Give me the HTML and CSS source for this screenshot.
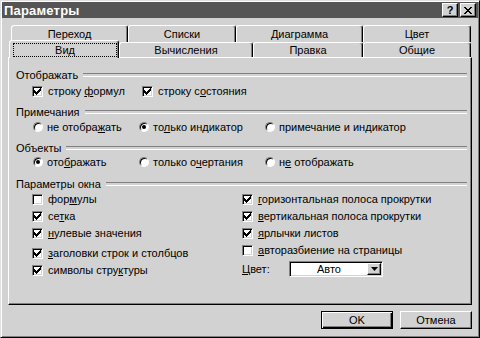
FILE: index.html
```html
<!DOCTYPE html>
<html lang="ru">
<head>
  <meta charset="UTF-8">
  <title>Параметры</title>
  <link rel="stylesheet" href="styles.css">
</head>
<body>
  <div class="dialog">
    <!-- Title bar -->
    <div class="titlebar">
      <span class="title">Параметры</span>
      <div class="title-buttons">
        <button class="tb-btn help">?</button>
        <button class="tb-btn">
          <svg width="8" height="7" viewBox="0 0 8 7"><path d="M0 0h2v1h1v1h2v-1h1v-1h2v1h-1v1h-1v1h-1v1h1v1h1v1h1v1h-2v-1h-1v-1h-2v1h-1v1h-2v-1h1v-1h1v-1h1v-1h-1v-1h-1v-1h-1z" fill="#000"/></svg>
        </button>
      </div>
    </div>

    <!-- Tabs -->
    <div class="tabs">
      <div class="tab-row back">
        <div class="tab">Переход</div>
        <div class="tab">Списки</div>
        <div class="tab">Диаграмма</div>
        <div class="tab">Цвет</div>
      </div>
      <div class="tab-row front">
        <div class="tab active"><span class="focus">Вид</span></div>
        <div class="tab">Вычисления</div>
        <div class="tab">Правка</div>
        <div class="tab">Общие</div>
      </div>
    </div>

    <!-- Page "Вид" -->
    <div class="panel">
      <div class="group-title g1">Отображать</div>
      <div class="row two">
        <label class="opt"><span class="check on"><svg viewBox="0 0 9 9"><path d="M1 3h1v3h-1zM2 4h1v3h-1zM3 5h1v3h-1zM4 4h1v3h-1zM5 3h1v3h-1zM6 2h1v3h-1zM7 1h1v3h-1z"/></svg></span><span>строку <u>ф</u>ормул</span></label>
        <label class="opt"><span class="check on"><svg viewBox="0 0 9 9"><path d="M1 3h1v3h-1zM2 4h1v3h-1zM3 5h1v3h-1zM4 4h1v3h-1zM5 3h1v3h-1zM6 2h1v3h-1zM7 1h1v3h-1z"/></svg></span><span>строку с<u>о</u>стояния</span></label>
      </div>

      <div class="group-title g2">Примечания</div>
      <div class="row three r2">
        <label class="opt radio-opt"><span class="radio"></span><span>не отобра<u>ж</u>ать</span></label>
        <label class="opt radio-opt"><span class="radio on"></span><span>то<u>л</u>ько индикатор</span></label>
        <label class="opt radio-opt"><span class="radio"></span><span>примечание и ин<u>д</u>икатор</span></label>
      </div>

      <div class="group-title g3">Объекты</div>
      <div class="row three">
        <label class="opt radio-opt"><span class="radio on"></span><span>ото<u>б</u>ражать</span></label>
        <label class="opt radio-opt"><span class="radio"></span><span>только о<u>ч</u>ертания</span></label>
        <label class="opt radio-opt"><span class="radio"></span><span>н<u>е</u> отображать</span></label>
      </div>

      <div class="group-title g4">Параметры окна</div>
      <div class="columns">
        <div class="col">
          <label class="opt line"><span class="check"></span><span>фор<u>м</u>улы</span></label>
          <label class="opt line"><span class="check on"><svg viewBox="0 0 9 9"><path d="M1 3h1v3h-1zM2 4h1v3h-1zM3 5h1v3h-1zM4 4h1v3h-1zM5 3h1v3h-1zM6 2h1v3h-1zM7 1h1v3h-1z"/></svg></span><span>се<u>т</u>ка</span></label>
          <label class="opt line"><span class="check on"><svg viewBox="0 0 9 9"><path d="M1 3h1v3h-1zM2 4h1v3h-1zM3 5h1v3h-1zM4 4h1v3h-1zM5 3h1v3h-1zM6 2h1v3h-1zM7 1h1v3h-1z"/></svg></span><span><u>н</u>улевые значения</span></label>
          <label class="opt line gap-before"><span class="check on"><svg viewBox="0 0 9 9"><path d="M1 3h1v3h-1zM2 4h1v3h-1zM3 5h1v3h-1zM4 4h1v3h-1zM5 3h1v3h-1zM6 2h1v3h-1zM7 1h1v3h-1z"/></svg></span><span><u>з</u>аголовки строк и столбцов</span></label>
          <label class="opt line"><span class="check on"><svg viewBox="0 0 9 9"><path d="M1 3h1v3h-1zM2 4h1v3h-1zM3 5h1v3h-1zM4 4h1v3h-1zM5 3h1v3h-1zM6 2h1v3h-1zM7 1h1v3h-1z"/></svg></span><span>символы стру<u>к</u>туры</span></label>
        </div>
        <div class="col">
          <label class="opt line"><span class="check on"><svg viewBox="0 0 9 9"><path d="M1 3h1v3h-1zM2 4h1v3h-1zM3 5h1v3h-1zM4 4h1v3h-1zM5 3h1v3h-1zM6 2h1v3h-1zM7 1h1v3h-1z"/></svg></span><span><u>г</u>оризонтальная полоса прокрутки</span></label>
          <label class="opt line"><span class="check on"><svg viewBox="0 0 9 9"><path d="M1 3h1v3h-1zM2 4h1v3h-1zM3 5h1v3h-1zM4 4h1v3h-1zM5 3h1v3h-1zM6 2h1v3h-1zM7 1h1v3h-1z"/></svg></span><span><u>в</u>ертикальная полоса прокрутки</span></label>
          <label class="opt line"><span class="check on"><svg viewBox="0 0 9 9"><path d="M1 3h1v3h-1zM2 4h1v3h-1zM3 5h1v3h-1zM4 4h1v3h-1zM5 3h1v3h-1zM6 2h1v3h-1zM7 1h1v3h-1z"/></svg></span><span><u>я</u>рлычки листов</span></label>
          <label class="opt line"><span class="check"></span><span><u>а</u>вторазбиение на страницы</span></label>
          <div class="color-row">
            <span class="color-label"><u>Ц</u>вет:</span>
            <div class="select">
              <span class="select-value">Авто</span>
              <span class="select-arrow"><svg width="7" height="4" viewBox="0 0 7 4"><path d="M0 0h7l-3.5 4z" fill="#000"/></svg></span>
            </div>
          </div>
        </div>
      </div>
    </div>

    <!-- Buttons -->
    <div class="buttons">
      <button class="btn default">OK</button>
      <button class="btn">Отмена</button>
    </div>
  </div>
</body>
</html>
```

FILE: styles.css
```css
/* Base */
* { margin: 0; padding: 0; box-sizing: border-box; }
body {
  background: #d2d2d2;
  color: #000;
  font-family: "Liberation Sans", Arial, sans-serif;
  font-size: 11px;
}
button { font: inherit; color: inherit; }
u { text-decoration: underline; text-underline-offset: 1px; }

/* Window frame */
.dialog {
  width: 480px;
  height: 338px;
  background: #d2d2d2;
  border: 1px solid;
  border-color: #e0e0e0 #000 #000 #e0e0e0;
  box-shadow: inset 1px 1px #fff, inset -1px -1px #808080;
  padding: 1px;
  display: flex;
  flex-direction: column;
}

/* Title bar */
.titlebar {
  height: 16px;
  background: #555;
  display: flex;
  align-items: center;
  justify-content: space-between;
  padding: 0 2px 0 2px;
}
.title {
  color: #fff;
  font-weight: bold;
  font-size: 13px;
  letter-spacing: 0.2px;
}
.title-buttons { display: flex; gap: 2px; }
.tb-btn {
  width: 16px;
  height: 14px;
  background: #d2d2d2;
  border: 1px solid;
  border-color: #fff #000 #000 #fff;
  box-shadow: inset -1px -1px #808080;
  display: flex;
  align-items: center;
  justify-content: center;
  font-weight: bold;
  font-size: 11px;
  line-height: 1;
}

/* Tabs */
.tabs { padding: 7px 6px 0 7px; }
.tab-row { display: flex; }
.tab-row.back { height: 17px; margin-left: 2px; }
.tab-row.front { height: 15px; align-items: flex-start; }
.tab {
  border: 1px solid;
  border-bottom: none;
  border-color: #fff #000 #000 #fff;
  border-radius: 3px 3px 0 0;
  box-shadow: inset -1px 0 #808080;
  background: #d2d2d2;
  display: flex;
  align-items: center;
  justify-content: center;
  height: 100%;
  white-space: nowrap;
}
.back .tab:nth-child(1) { width: 117px; }
.back .tab:nth-child(2) { width: 108px; }
.back .tab:nth-child(3) { width: 127px; }
.back .tab:nth-child(4) { width: 108px; }
.front .tab:nth-child(1) { width: 110px; }
.front .tab:nth-child(2) { width: 134px; }
.front .tab:nth-child(3) { width: 110px; }
.front .tab:nth-child(4) { width: 108px; }
.tab.active {
  height: 18px;
  margin-top: -2px;
  padding: 2px 1px 1px 3px;
  position: relative;
  z-index: 1;
  align-items: stretch;
}
.focus {
  flex: 1;
  border: 1px dotted #000;
  display: flex;
  align-items: center;
  justify-content: center;
  padding-bottom: 1px;
}

/* Tab page */
.panel {
  margin: 0 6px;
  height: 248px;
  border: 1px solid;
  border-color: #fff #000 #000 #fff;
  box-shadow: inset -1px -1px #808080;
  padding: 10px 4px 0 7px;
  display: flex;
  flex-direction: column;
}
.group-title {
  height: 13px;
  display: flex;
  align-items: center;
  white-space: nowrap;
}
.group-title::after {
  content: '';
  flex: 1;
  height: 2px;
  margin-left: 5px;
  border-top: 1px solid #808080;
  border-bottom: 1px solid #fff;
}
.g2, .g3 { margin-top: 6px; }
.g4 { margin-top: 7px; }

.row {
  height: 16px;
  display: grid;
  align-items: center;
  padding-left: 16px;
}
.row.two { grid-template-columns: 110px auto; margin-top: 2px; }
.row.three { grid-template-columns: 106px 126px auto; }
.row.r2 { margin-top: 1px; }

.opt {
  display: flex;
  align-items: center;
  gap: 5px;
  white-space: nowrap;
}
.radio-opt { gap: 4px; padding-left: 1px; }

/* Check boxes and radios */
.check {
  width: 11px;
  height: 11px;
  flex: none;
  background: #fff;
  border: 1px solid;
  border-color: #808080 #fff #fff #808080;
  box-shadow: inset 1px 1px #000, inset -1px -1px #d2d2d2;
  display: flex;
}
.check svg { width: 9px; height: 9px; display: block; }
.check path { fill: #000; }
.radio {
  width: 10px;
  height: 10px;
  flex: none;
  border-radius: 50%;
  background: #fff;
  border: 1px solid;
  border-color: #808080 #fff #fff #808080;
  box-shadow: inset 1px 1px #000;
  display: grid;
  place-items: center;
}
.radio.on::after {
  content: '';
  width: 4px;
  height: 4px;
  border-radius: 50%;
  background: #000;
}

/* Window options */
.columns {
  display: grid;
  grid-template-columns: 210px auto;
  padding-left: 16px;
  margin-top: 1px;
}
.col {
  display: flex;
  flex-direction: column;
  gap: 1px;
}
.line { height: 16px; }
.gap-before { margin-top: 3px; }

.color-row {
  display: flex;
  align-items: center;
  height: 18px;
  margin-top: 1px;
}
.color-label { width: 47px; }
.select {
  width: 94px;
  height: 16px;
  background: #fff;
  border: 1px solid;
  border-color: #808080 #fff #fff #808080;
  box-shadow: inset 1px 1px #000, inset -1px -1px #d2d2d2;
  display: flex;
  padding: 1px;
}
.select-value {
  flex: 1;
  display: flex;
  align-items: center;
  justify-content: center;
}
.select-arrow {
  width: 14px;
  background: #d2d2d2;
  border: 1px solid;
  border-color: #fff #000 #000 #fff;
  box-shadow: inset -1px -1px #808080;
  display: flex;
  align-items: center;
  justify-content: center;
}

/* Dialog buttons */
.buttons {
  display: flex;
  justify-content: flex-end;
  gap: 7px;
  margin-top: 6px;
  padding-right: 6px;
}
.btn {
  width: 72px;
  height: 18px;
  background: #d2d2d2;
  border: 1px solid;
  border-color: #fff #000 #000 #fff;
  box-shadow: inset -1px -1px #808080;
}
.btn.default {
  border-color: #000;
  box-shadow: inset 1px 1px #fff, inset -1px -1px #000, inset -2px -2px #808080;
}
```
